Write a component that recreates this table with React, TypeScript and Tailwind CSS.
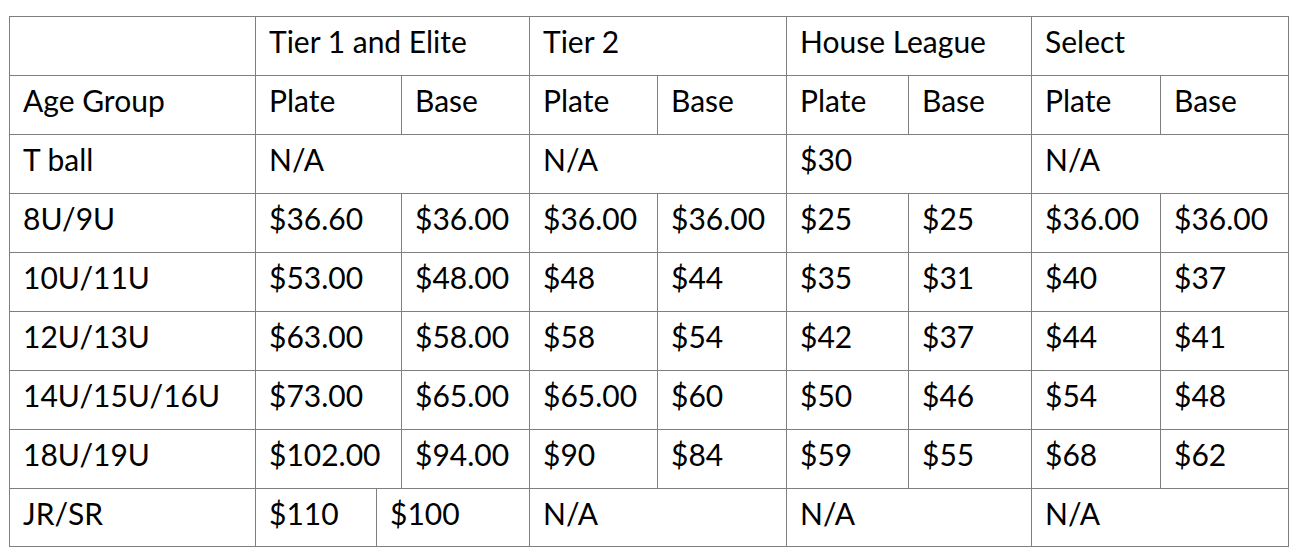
import React from "react";

const widths = [246, 121, 25, 128, 128, 129, 122, 123, 129, 128];

type Cell = { t: string; span?: number };

const rows: Cell[][] = [
  [{ t: "" }, { t: "Tier 1 and Elite", span: 3 }, { t: "Tier 2", span: 2 }, { t: "House League", span: 2 }, { t: "Select", span: 2 }],
  [{ t: "Age Group" }, { t: "Plate", span: 2 }, { t: "Base" }, { t: "Plate" }, { t: "Base" }, { t: "Plate" }, { t: "Base" }, { t: "Plate" }, { t: "Base" }],
  [{ t: "T ball" }, { t: "N/A", span: 3 }, { t: "N/A", span: 2 }, { t: "$30", span: 2 }, { t: "N/A", span: 2 }],
  [{ t: "8U/9U" }, { t: "$36.60", span: 2 }, { t: "$36.00" }, { t: "$36.00" }, { t: "$36.00" }, { t: "$25" }, { t: "$25" }, { t: "$36.00" }, { t: "$36.00" }],
  [{ t: "10U/11U" }, { t: "$53.00", span: 2 }, { t: "$48.00" }, { t: "$48" }, { t: "$44" }, { t: "$35" }, { t: "$31" }, { t: "$40" }, { t: "$37" }],
  [{ t: "12U/13U" }, { t: "$63.00", span: 2 }, { t: "$58.00" }, { t: "$58" }, { t: "$54" }, { t: "$42" }, { t: "$37" }, { t: "$44" }, { t: "$41" }],
  [{ t: "14U/15U/16U" }, { t: "$73.00", span: 2 }, { t: "$65.00" }, { t: "$65.00" }, { t: "$60" }, { t: "$50" }, { t: "$46" }, { t: "$54" }, { t: "$48" }],
  [{ t: "18U/19U" }, { t: "$102.00", span: 2 }, { t: "$94.00" }, { t: "$90" }, { t: "$84" }, { t: "$59" }, { t: "$55" }, { t: "$68" }, { t: "$62" }],
  [{ t: "JR/SR" }, { t: "$110" }, { t: "$100", span: 2 }, { t: "N/A", span: 2 }, { t: "N/A", span: 2 }, { t: "N/A", span: 2 }],
];

export default function App() {
  return (
    <div className="w-[1296px] h-[560px] bg-white pt-[16px] pl-[9px]" style={{ fontFamily: "Lato, 'Open Sans', sans-serif" }}>
      <table className="table-fixed border-collapse w-[1279px] text-black">
        <colgroup>
          {widths.map((w, i) => (
            <col key={i} style={{ width: w }} />
          ))}
        </colgroup>
        <tbody>
          {rows.map((r, ri) => (
            <tr key={ri} className={ri === rows.length - 1 ? "h-[58px]" : "h-[59px]"}>
              {r.map((c, ci) => (
                <td
                  key={ci}
                  colSpan={c.span ?? 1}
                  className="border border-[#7f7f7f] align-top pl-[13px] pt-[6px] text-[30px] leading-[36px] whitespace-nowrap overflow-hidden"
                >
                  {c.t}
                </td>
              ))}
            </tr>
          ))}
        </tbody>
      </table>
    </div>
  );
}
